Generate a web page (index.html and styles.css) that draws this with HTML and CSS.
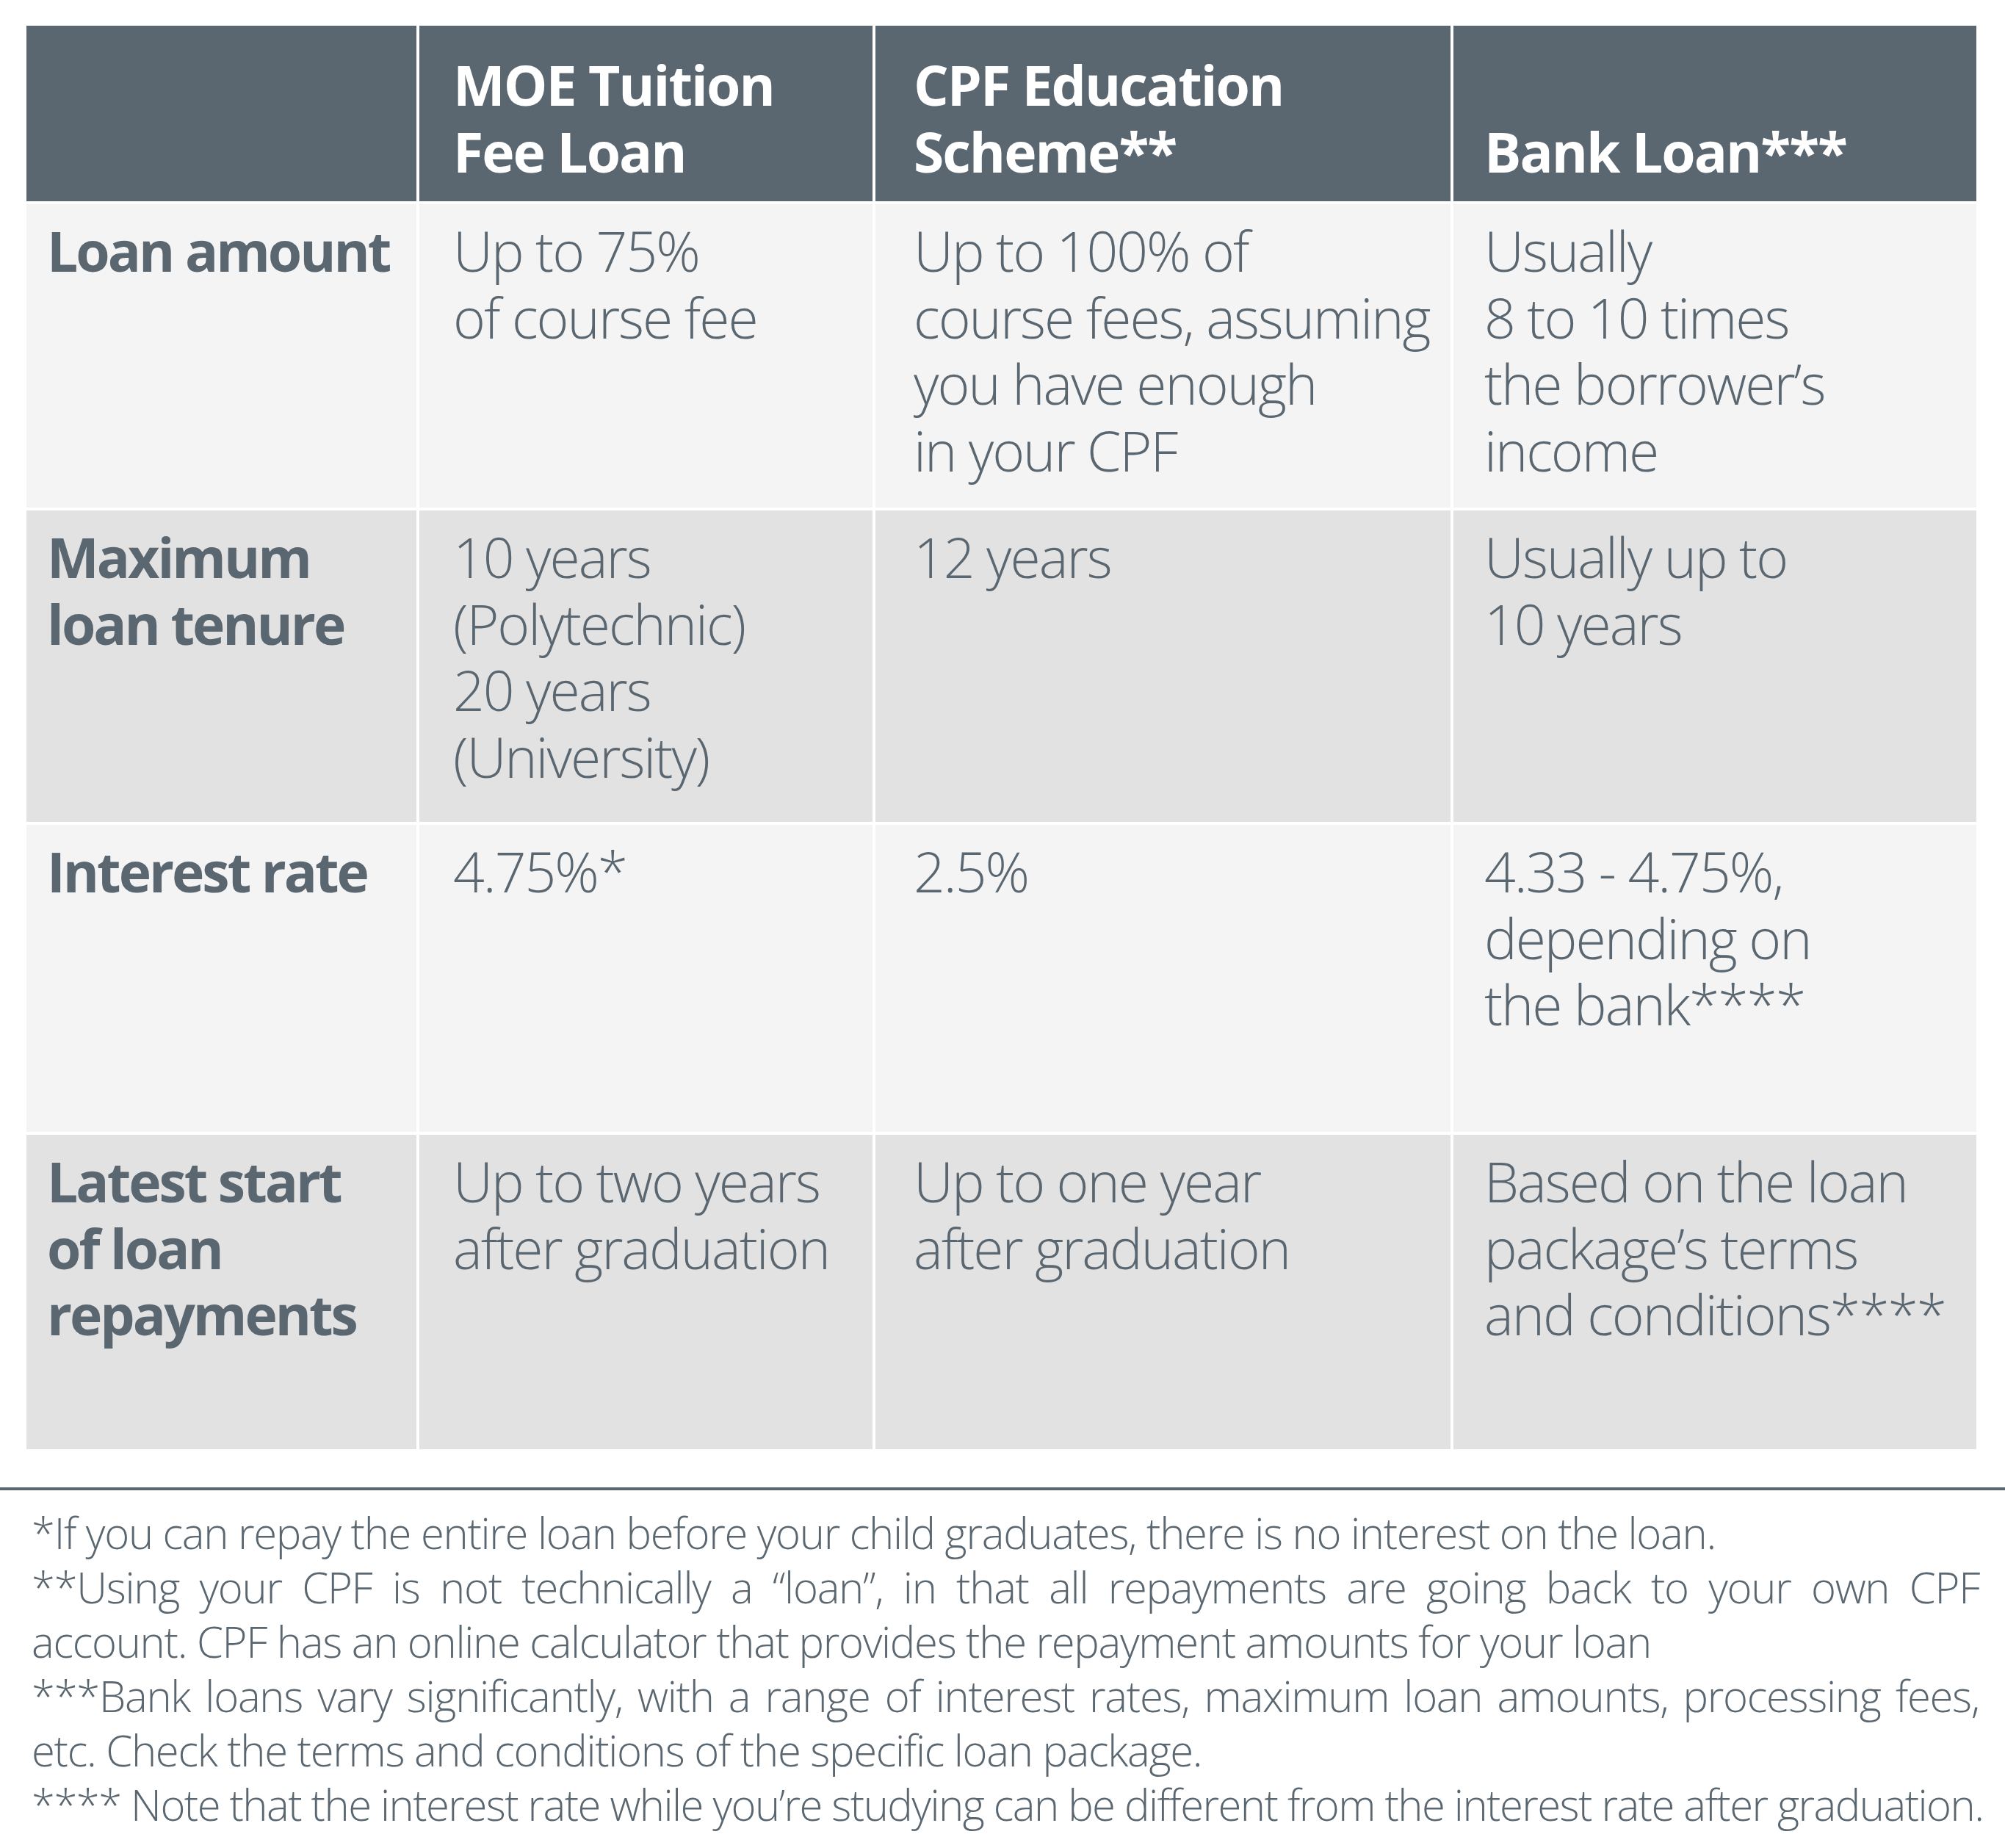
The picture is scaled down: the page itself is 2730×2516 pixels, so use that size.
FILE: index.html
```html
<!DOCTYPE html>
<html lang="en">
<head>
<meta charset="utf-8">
<title>Education loan comparison</title>
<link rel="stylesheet" href="styles.css">
</head>
<body>
<div class="page">
  <div class="table">
    <div class="cell head c1"></div>
    <div class="cell head c2">MOE Tuition<br>Fee Loan</div>
    <div class="cell head c3">CPF Education<br>Scheme**</div>
    <div class="cell head c4">Bank Loan***</div>

    <div class="cell light label c1">Loan amount</div>
    <div class="cell light c2">Up to 75%<br>of course fee</div>
    <div class="cell light c3">Up to 100% of<br>course fees, assuming<br>you have enough<br>in your CPF</div>
    <div class="cell light c4">Usually<br>8 to 10 times<br>the borrower’s<br>income</div>

    <div class="cell dark label c1">Maximum<br>loan tenure</div>
    <div class="cell dark c2">10 years<br>(Polytechnic)<br>20 years<br>(University)</div>
    <div class="cell dark c3">12 years</div>
    <div class="cell dark c4">Usually up to<br>10 years</div>

    <div class="cell light label c1">Interest rate</div>
    <div class="cell light c2">4.75%*</div>
    <div class="cell light c3">2.5%</div>
    <div class="cell light c4">4.33 - 4.75%,<br>depending on<br>the bank****</div>

    <div class="cell dark label c1">Latest start<br>of loan<br>repayments</div>
    <div class="cell dark c2">Up to two years<br>after graduation</div>
    <div class="cell dark c3">Up to one year<br>after graduation</div>
    <div class="cell dark c4">Based on the loan<br>package’s terms<br>and conditions****</div>
  </div>

  <div class="notes">
    <p>*If you can repay the entire loan before your child graduates, there is no interest on the loan.</p>
    <p><span class="jline">**Using your CPF is not technically a “loan”, in that all repayments are going back to your own CPF</span>account. CPF has an online calculator that provides the repayment amounts for your loan</p>
    <p><span class="jline">***Bank loans vary significantly, with a range of interest rates, maximum loan amounts, processing fees,</span>etc. Check the terms and conditions of the specific loan package.</p>
    <p class="single">**** Note that the interest rate while you’re studying can be different from the interest rate after graduation.</p>
  </div>
</div>
</body>
</html>
```
FILE: styles.css
```css
html, body {
  margin: 0;
  padding: 0;
  background: #ffffff;
}

.page {
  width: 2730px;
  padding-top: 35px;
  color: #5b6770;
  font-family: "Open Sans", "Noto Sans", sans-serif;
}

.table {
  display: grid;
  grid-template-columns: 531px 617px 783px 712px;
  grid-template-rows: 239px 413px 424px 418px 428px;
  column-gap: 4px;
  row-gap: 4px;
  margin-left: 36px;
  width: 2655px;
}

.cell {
  font-size: 75px;
  line-height: 90.5px;
  font-weight: 300;
  font-stretch: 88%;
  letter-spacing: -2px;
  white-space: nowrap;
  padding-top: 18px;
  box-sizing: border-box;
}

.c1 { padding-left: 28px; }
.c2 { padding-left: 46px; }
.c3 { padding-left: 52px; }
.c4 { padding-left: 42px; }

.head {
  background: #5b6770;
  color: #ffffff;
  font-weight: 700;
  letter-spacing: -2px;
  display: flex;
  flex-direction: column;
  justify-content: flex-end;
  padding-top: 0;
  padding-bottom: 23px;
}

.label {
  font-weight: 700;
  letter-spacing: -3px;
}

.light { background: #f4f4f4; }
.dark { background: #e2e2e2; }

.notes {
  margin-top: 52px;
  border-top: 4px solid #5b6770;
  padding: 21px 35px 0 43px;
}

.notes p {
  margin: 0;
  font-size: 58px;
  line-height: 74px;
  font-weight: 300;
  font-stretch: 88%;
  letter-spacing: -1.3px;
  text-align: justify;
}

.notes .jline {
  display: block;
  text-align: justify;
  text-align-last: justify;
}

.notes .single {
  white-space: nowrap;
  letter-spacing: -1.55px;
}
```
